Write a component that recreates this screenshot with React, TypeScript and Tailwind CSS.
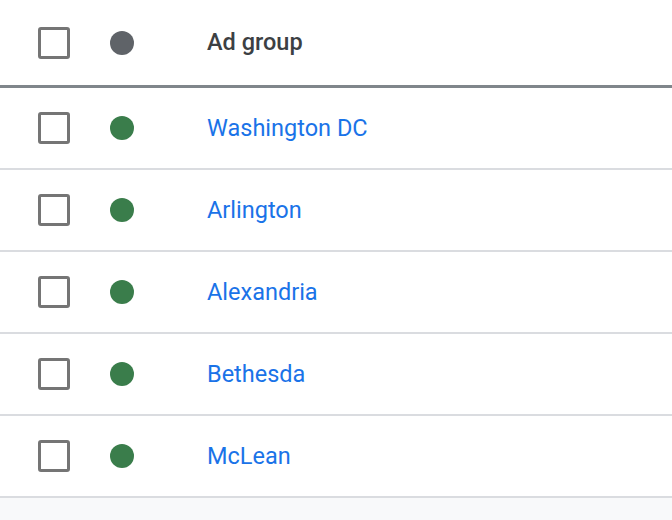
import React from 'react';

const groups = ["Washington DC", "Arlington", "Alexandria", "Bethesda", "McLean"];

function Checkbox() {
  return <div className="w-[32px] h-[32px] rounded-[3px] border-[3px] border-[#757575] bg-white shrink-0" />;
}

export default function App() {
  return (
    <div className="w-[672px] h-[520px] bg-[#f8f9fa] overflow-hidden" style={{ fontFamily: "Roboto, 'Liberation Sans', sans-serif" }}>
      <div className="bg-white">
        <div className="h-[88px] flex items-center border-b-[3px] border-[#80868b]">
          <div className="pl-[38px] w-[110px] flex items-center">
            <Checkbox />
          </div>
          <div className="w-[97px] flex items-center">
            <div className="w-[24px] h-[24px] rounded-full bg-[#5f6368]" />
          </div>
          <div className="text-[23.5px] font-medium text-[#3c4043]">Ad group</div>
        </div>
        {groups.map((g) => (
          <div key={g} className="h-[82px] flex items-center border-b-2 border-[#dadce0]">
            <div className="pl-[38px] w-[110px] flex items-center">
              <Checkbox />
            </div>
            <div className="w-[97px] flex items-center">
              <div className="w-[24px] h-[24px] rounded-full bg-[#3a7d4b]" />
            </div>
            <div className="text-[23.5px] text-[#1a73e8] pt-[2px]">{g}</div>
          </div>
        ))}
      </div>
    </div>
  );
}
